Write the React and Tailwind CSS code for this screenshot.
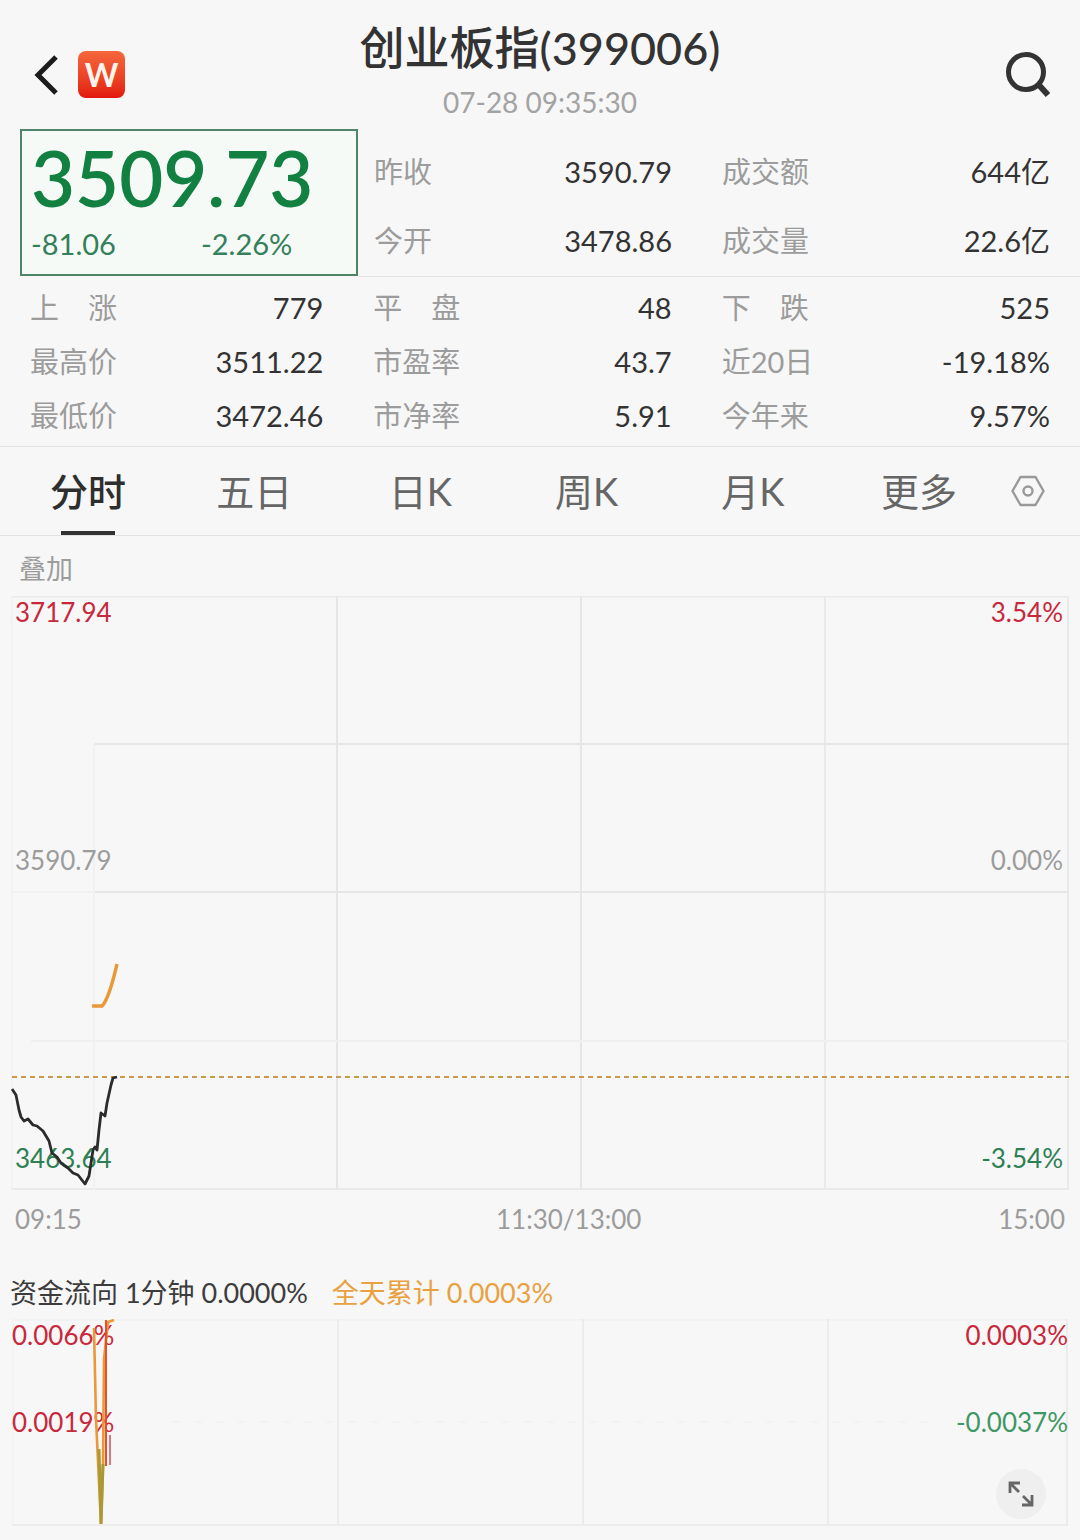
import React, { useState } from "react";

const summary = [
  [
    { label: "昨收", value: "3590.79" },
    { label: "今开", value: "3478.86" },
  ],
  [
    { label: "成交额", value: "644亿" },
    { label: "成交量", value: "22.6亿" },
  ],
];

const details = [
  { label: "上　涨", value: "779" },
  { label: "平　盘", value: "48" },
  { label: "下　跌", value: "525" },
  { label: "最高价", value: "3511.22" },
  { label: "市盈率", value: "43.7" },
  { label: "近20日", value: "-19.18%" },
  { label: "最低价", value: "3472.46" },
  { label: "市净率", value: "5.91" },
  { label: "今年来", value: "9.57%" },
];

const tabs = ["分时", "五日", "日K", "周K", "月K", "更多"];

const pricePoints =
  "1,493 5,499 8,514 10,521 13,525 17,523 22,529 26,530 32,535 38,545 41,557 46,561 50,567 57,572 62,577 67,579 74,588 78,580 80,567 82,554 84,551 86,554 88,534 90,517 94,520 96,507 100,489 102,482 106,481";

const Header = () => (
  <header className="grid grid-cols-[1fr_auto_1fr] items-center px-[30px] pt-5">
    <div className="flex items-center gap-4">
      <button aria-label="返回" className="flex w-8 justify-center">
        <svg width="32" height="44" viewBox="0 0 32 44" fill="none" stroke="#1c1c1c" strokeWidth="5">
          <path d="M26 4 L8 22 L26 40" />
        </svg>
      </button>
      <div className="flex h-[47px] w-[47px] items-center justify-center rounded-lg bg-gradient-to-b from-[#f5663c] to-[#e3150c] text-[32px] leading-none font-bold text-[#fff4ec]">
        W
      </div>
    </div>
    <div className="pb-[9px] text-center">
      <h1 className="text-[45px] leading-[56px] font-medium text-[#333]">创业板指(399006)</h1>
      <p className="mt-2 text-[28px] leading-9 text-[#a3a3a3]">07-28 09:35:30</p>
    </div>
    <button aria-label="搜索" className="justify-self-end">
      <svg width="44" height="48" viewBox="1 0 44 48" fill="none" stroke="#333" strokeWidth="5">
        <circle cx="21" cy="21" r="17.5" />
        <path d="M33 33 L43 44" strokeWidth="6" />
      </svg>
    </button>
  </header>
);

const StatRow = ({ label, value }) => (
  <div className="flex items-center justify-between text-[29px]">
    <dt className="text-[#9c9c9c]">{label}</dt>
    <dd className="text-[#333]">{value}</dd>
  </div>
);

const Quote = () => (
  <section className="grid grid-cols-[338fr_314fr_408fr] pl-5">
    <div className="mb-px border-2 border-[#4f8468] bg-[#f6faf7] pt-[7px] pl-[9px] text-[#128040]">
      <p className="text-[76px] leading-[80px] font-semibold">3509.73</p>
      <div className="mt-[6px] grid grid-cols-[170fr_155fr] text-[29px] leading-10 text-[#33805a]">
        <span>-81.06</span>
        <span>-2.26%</span>
      </div>
    </div>
    {summary.map((group, i) => (
      <dl
        key={i}
        className={`border-b border-[#e2e2e2] pt-2 pb-px leading-[69px] ${i === 0 ? "pl-4" : "pl-[50px] pr-[30px]"}`}
      >
        {group.map((item) => (
          <StatRow key={item.label} {...item} />
        ))}
      </dl>
    ))}
  </section>
);

const Tabs = () => {
  const [active, setActive] = useState("分时");
  return (
    <nav className="flex border-t border-b border-[#e2e2e2] pr-[26px] pl-[5px]">
      {tabs.map((tab) => (
        <button
          key={tab}
          onClick={() => setActive(tab)}
          className={`flex flex-1 flex-col items-center pt-4 text-[38px] leading-[56px] ${
            tab === active ? "font-medium text-[#2e2e2e]" : "text-[#666]"
          }`}
        >
          {tab}
          <span className={`mt-3 h-[4px] w-[54px] ${tab === active ? "bg-[#333]" : ""}`} />
        </button>
      ))}
      <button aria-label="设置" className="flex w-[52px] items-center justify-center">
        <svg width="34" height="34" viewBox="0 0 34 34" fill="none" stroke="#999" strokeWidth="2.4">
          <path d="M9.5 3 H24.5 L32.5 17 L24.5 31 H9.5 L1.5 17 Z" strokeLinejoin="round" />
          <circle cx="17" cy="17" r="4.5" />
        </svg>
      </button>
    </nav>
  );
};

const PriceChart = () => (
  <section>
    <button className="ml-[19px] block pt-[14px] text-[27px] leading-[38px] text-[#9c9c9c]">叠加</button>
    <div className="relative mx-[11px] mt-2">
      <svg
        className="block h-[594px] w-full"
        viewBox="0 0 1058 594"
        preserveAspectRatio="none"
        fill="none"
      >
        <g stroke="#e6e6e6" strokeWidth="2">
          <path d="M0 0.5 H1058 M0 593 H1058 M1057 0 V594" stroke="#eaeaea" />
          <path d="M0.5 0 V594 M0 296 H84 M83 148 V594" stroke="#f1f1f1" />
          <path d="M326 0 V594 M570 0 V594" />
          <path d="M814 0 V594" stroke="#eaeaea" />
          <path d="M84 148 H1058 M84 296 H1058" />
          <path d="M20 445 H1058" stroke="#f0f0f0" />
        </g>
        <path d="M1 481 H1058" stroke="#c99a4e" strokeWidth="2" strokeDasharray="5 4" />
        <path d="M81 410 H91 Q98 403 106 368" stroke="#e9983a" strokeWidth="3.4" />
      </svg>
      <div className="absolute inset-x-1 top-0 text-[26px] leading-8">
        <div className="flex justify-between pr-[2px] text-[#c8283c]">
          <span>3717.94</span>
          <span>3.54%</span>
        </div>
        <div className="mt-[216px] flex justify-between pr-[2px] text-[#9c9c9c]">
          <span>3590.79</span>
          <span>0.00%</span>
        </div>
        <div className="mt-[266px] flex justify-between pr-[2px] text-[#2c8053]">
          <span>3463.64</span>
          <span>-3.54%</span>
        </div>
      </div>
      <svg
        className="absolute inset-0 h-full w-full"
        viewBox="0 0 1058 594"
        preserveAspectRatio="none"
        fill="none"
      >
        <polyline points={pricePoints} stroke="#2b2b2b" strokeWidth="2.8" strokeLinejoin="round" />
      </svg>
    </div>
    <div className="grid grid-cols-[481fr_569fr] px-[15px] pt-[11px] text-[26px] leading-9 text-[#9c9c9c]">
      <span>09:15</span>
      <div className="flex justify-between">
        <span>11:30/13:00</span>
        <span>15:00</span>
      </div>
    </div>
  </section>
);

const FundFlow = () => (
  <section className="pt-9 pb-[14px]">
    <h2 className="flex gap-6 px-[10px] text-[27px] leading-10 text-[#3c3c3c]">
      <span>资金流向 1分钟 0.0000%</span>
      <span className="text-[#e8a040]">全天累计 0.0003%</span>
    </h2>
    <div className="relative mx-3 mt-[6px]">
      <svg
        className="block h-[207px] w-full"
        viewBox="0 0 1056 207"
        preserveAspectRatio="none"
        fill="none"
      >
        <g stroke="#ececec" strokeWidth="2">
          <path d="M1 0 V207 M0 1 H1056" stroke="#f3f3f3" />
          <path d="M326 0 V207 M571 0 V207 M816 0 V207 M1055 0 V207" />
          <path d="M0 206 H1056" />
          <path d="M160 103 H920" stroke="#f3f3f3" strokeDasharray="8 14" />
        </g>
      </svg>
      <div className="absolute inset-x-0 top-0 text-[26px] leading-8">
        <div className="flex justify-between text-[#c8283c]">
          <span>0.0066%</span>
          <span>0.0003%</span>
        </div>
        <div className="mt-[55px] flex justify-between">
          <span className="text-[#c8283c]">0.0019%</span>
          <span className="text-[#3f9765]">-0.0037%</span>
        </div>
      </div>
      <svg
        className="absolute inset-0 h-full w-full"
        viewBox="0 0 1056 207"
        preserveAspectRatio="none"
        fill="none"
      >
        <path d="M82 9 L84 100 L89 205 L91 148 L92 40 L96 3 L102 1" stroke="#e9983a" strokeWidth="2.6" />
        <path d="M87 130 L89 205 L91 145" stroke="#a89a35" strokeWidth="3" />
        <path d="M94 1 V147" stroke="#e2502e" strokeWidth="2" />
        <path d="M98 116 V146" stroke="#cf5a62" strokeWidth="1.6" />
      </svg>
      <button
        aria-label="全屏"
        className="absolute right-[22px] bottom-[7px] flex h-[50px] w-[50px] items-center justify-center rounded-full bg-[#efefef]"
      >
        <svg width="28" height="28" viewBox="0 0 28 28" fill="none" stroke="#666" strokeWidth="2.8">
          <path d="M3 13 V3 H13 M3 3 L12 12" />
          <path d="M25 15 V25 H15 M25 25 L16 16" />
        </svg>
      </button>
    </div>
  </section>
);

export default function App() {
  return (
    <main className="min-h-screen bg-[#f7f7f7] font-['Lato','Noto_Sans_CJK_SC',sans-serif]">
      <Header />
      <Quote />
      <dl className="grid grid-cols-[293fr_298fr_328fr] gap-x-[50px] px-[30px] pt-1 pb-[3px] leading-[54px]">
        {details.map((item) => (
          <StatRow key={item.label} {...item} />
        ))}
      </dl>
      <Tabs />
      <PriceChart />
      <FundFlow />
    </main>
  );
}
